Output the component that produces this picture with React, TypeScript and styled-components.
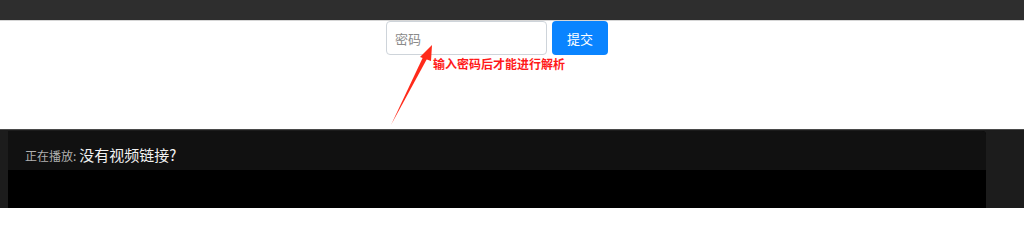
import React from 'react';
import styled, { createGlobalStyle } from 'styled-components';

const GlobalStyle = createGlobalStyle`
  html, body {
    margin: 0;
    padding: 0;
    background: #fff;
    font-family: "Microsoft YaHei", "Noto Sans CJK SC", "Liberation Sans", sans-serif;
  }
`;

const TopBar = styled.div`
  height: 20px;
  background: #2e2e2e;
  border-bottom: 1px solid #d6d6d6;
`;

const FormArea = styled.div`
  position: relative;
  height: 108px;
  background: #fff;
  border-bottom: 1px solid #4a4a4a;
`;

const FormRow = styled.div`
  display: flex;
  gap: 5px;
  padding-left: 386px;
`;

const PasswordInput = styled.input`
  box-sizing: border-box;
  width: 161px;
  height: 34px;
  border: 1px solid #ced4da;
  border-radius: 4px;
  padding: 0 8px;
  font-size: 13px;
  font-family: inherit;
  color: #495057;
  &::placeholder {
    color: #8a8a8a;
  }
`;

const SubmitButton = styled.button`
  width: 56px;
  height: 34px;
  border: none;
  border-radius: 4px;
  background: #0a84ff;
  color: #fff;
  font-size: 13px;
  font-family: inherit;
`;

const Hint = styled.div`
  padding: 1px 0 0 433px;
  font-size: 12px;
  font-weight: bold;
  color: #ff1a1a;
  line-height: 16px;
`;

const Arrow = styled.svg`
  position: absolute;
  left: 386px;
  top: 4px;
`;

const Stage = styled.div`
  background: #1c1c1c;
  padding: 1px 38px 0 8px;
  height: 77px;
`;

const Player = styled.div`
  background: #000;
  border-top-right-radius: 4px;
  overflow: hidden;
  height: 100%;
`;

const PlayerHeader = styled.div`
  display: flex;
  align-items: baseline;
  height: 39px;
  box-sizing: border-box;
  padding: 13px 0 0 17px;
  background: #111;
`;

const Label = styled.span`
  font-size: 12px;
  color: #b0b0b0;
  margin-right: 3px;
`;

const Title = styled.span`
  font-size: 15px;
  color: #f2f2f2;
`;

export default function App() {
  return (
    <>
      <GlobalStyle />
      <TopBar />
      <FormArea>
        <FormRow>
          <PasswordInput placeholder="密码" />
          <SubmitButton>提交</SubmitButton>
        </FormRow>
        <Hint>输入密码后才能进行解析</Hint>
        <Arrow width="60" height="110" viewBox="0 0 60 110">
          <path d="M5 100 L38 30 L42 32 Z" fill="#ff2a1a" />
          <path d="M46 20 L34 32 L45 36 Z" fill="#ff2a1a" />
        </Arrow>
      </FormArea>
      <Stage>
        <Player>
          <PlayerHeader>
            <Label>正在播放:</Label>
            <Title>没有视频链接?</Title>
          </PlayerHeader>
        </Player>
      </Stage>
    </>
  );
}
